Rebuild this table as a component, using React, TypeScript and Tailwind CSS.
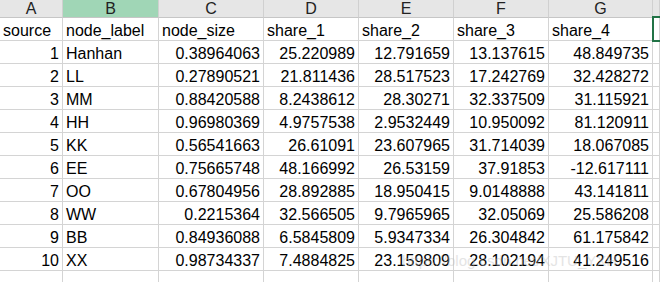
import React from "react";

const rows: [string, string, string, string, string, string, string][] = [
  ["1", "Hanhan", "0.38964063", "25.220989", "12.791659", "13.137615", "48.849735"],
  ["2", "LL", "0.27890521", "21.811436", "28.517523", "17.242769", "32.428272"],
  ["3", "MM", "0.88420588", "8.2438612", "28.30271", "32.337509", "31.115921"],
  ["4", "HH", "0.96980369", "4.9757538", "2.9532449", "10.950092", "81.120911"],
  ["5", "KK", "0.56541663", "26.61091", "23.607965", "31.714039", "18.067085"],
  ["6", "EE", "0.75665748", "48.166992", "26.53159", "37.91853", "-12.617111"],
  ["7", "OO", "0.67804956", "28.892885", "18.950415", "9.0148888", "43.141811"],
  ["8", "WW", "0.2215364", "32.566505", "9.7965965", "32.05069", "25.586208"],
  ["9", "BB", "0.84936088", "6.5845809", "5.9347334", "26.304842", "61.175842"],
  ["10", "XX", "0.98734337", "7.4884825", "23.159809", "28.102194", "41.249516"],
];

const letters = ["A", "B", "C", "D", "E", "F", "G", ""];
const titles = ["source", "node_label", "node_size", "share_1", "share_2", "share_3", "share_4", ""];

const cell =
  "h-[23px] border-r border-b border-[#d4d4d4] pt-[3px] leading-[19px] whitespace-nowrap overflow-hidden";

export default function App() {
  return (
    <div
      className="relative w-[660px] h-[282px] overflow-hidden bg-white text-[16px] text-black"
      style={{ fontFamily: '"Liberation Sans", Arial, sans-serif' }}
    >
      <div className="grid grid-cols-[63px_96px_105px_95px_95px_95px_104px_1fr]">
        {letters.map((l, i) => (
          <div
            key={"h" + i}
            className={
              "h-[18px] border-r border-b border-r-[#d0d0d0] border-b-[#c6c6c6] pt-[1px] leading-[16px] text-center text-[#222] " +
              (i === 1 ? "bg-[#a0d6b6]" : "bg-[#e6e6e6]")
            }
          >
            {l}
          </div>
        ))}
        {titles.map((t, i) => (
          <div key={"t" + i} className={cell + " pl-[3px] text-left"}>
            {t}
          </div>
        ))}
        {rows.map((r, ri) => (
          <React.Fragment key={"r" + ri}>
            {r.map((v, ci) => (
              <div
                key={ci}
                className={cell + (ci === 1 ? " pl-[3px] text-left" : " pr-[3px] text-right")}
              >
                {v}
              </div>
            ))}
            <div className={cell} />
          </React.Fragment>
        ))}
        {letters.map((_, i) => (
          <div key={"e" + i} className={cell} />
        ))}
      </div>

      <div className="absolute left-[652px] top-[16px] w-[20px] h-[26px] border-2 border-[#217346]" />

      <div className="absolute left-[402px] top-[252px] text-[15px] leading-[18px] text-[#bdbdbd] opacity-40 whitespace-nowrap pointer-events-none">
        https://blog.csdn.net/XJTU_YXH
      </div>
    </div>
  );
}
